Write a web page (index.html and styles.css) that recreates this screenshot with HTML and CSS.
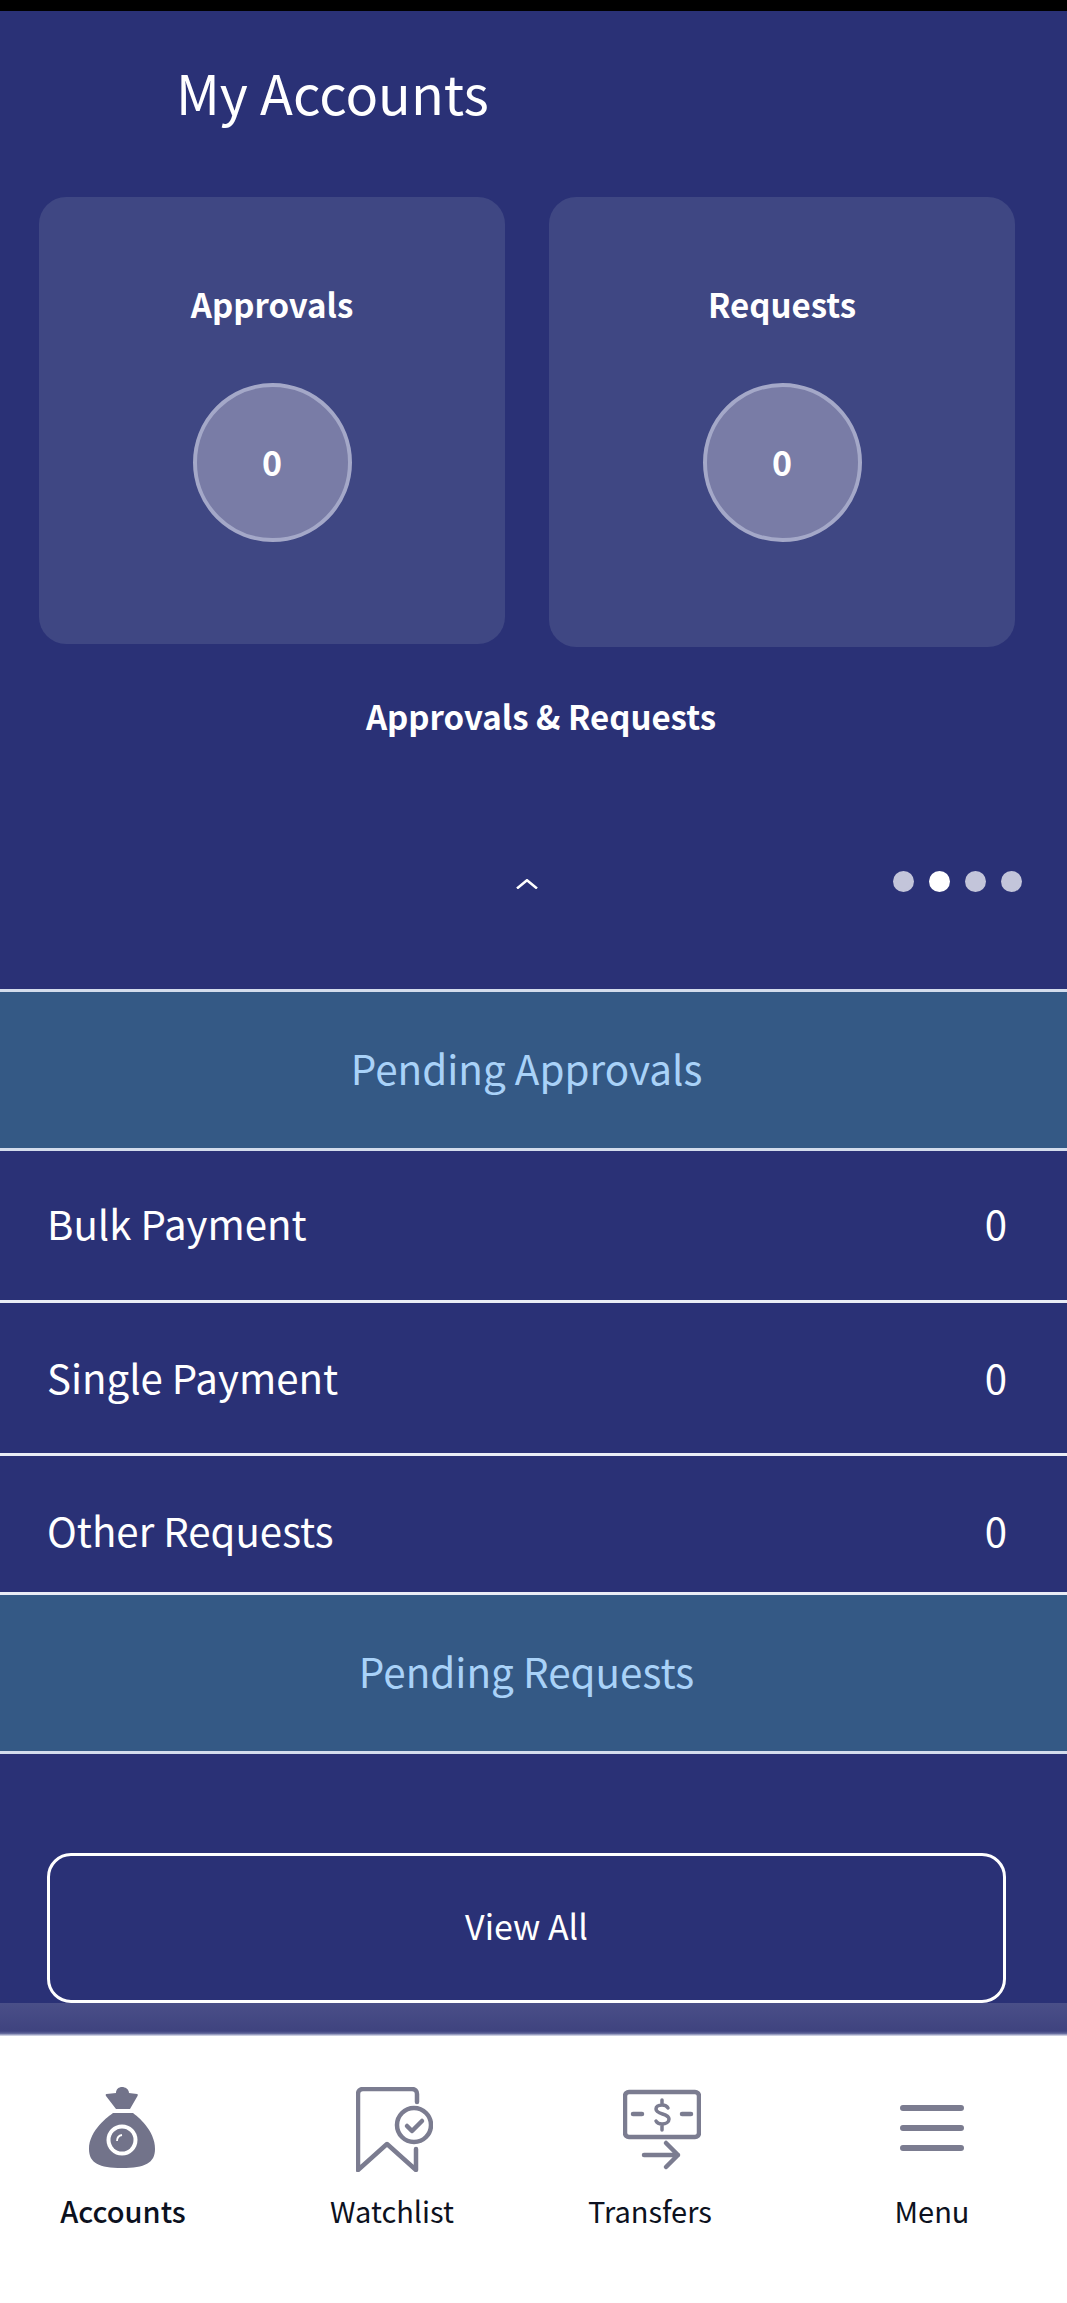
FILE: index.html
```html
<!DOCTYPE html>
<html lang="en">
<head>
<meta charset="utf-8">
<title>My Accounts</title>
<link rel="stylesheet" href="styles.css">
</head>
<body>
<div class="status"></div>
<main class="screen">
  <h1 class="title">My Accounts</h1>
  <section class="cards">
    <article class="card">
      <h2 class="card-name">Approvals</h2>
      <div class="count">0</div>
    </article>
    <article class="card card-tall">
      <h2 class="card-name">Requests</h2>
      <div class="count">0</div>
    </article>
  </section>
  <p class="caption">Approvals &amp; Requests</p>
  <div class="pager">
    <svg class="chevron" viewBox="0 0 22 10"><path d="M1 9.500 11 1.200 21 9.500"/></svg>
    <div class="dots">
      <span class="dot"></span><span class="dot dot-on"></span><span class="dot"></span><span class="dot"></span>
    </div>
  </div>
  <div class="band band-first"><span>Pending Approvals</span></div>
  <div class="row"><span>Bulk Payment</span><span>0</span></div>
  <div class="row row-b"><span>Single Payment</span><span>0</span></div>
  <div class="row row-c"><span>Other Requests</span><span>0</span></div>
  <div class="band"><span>Pending Requests</span></div>
  <div class="action"><button class="view-all" type="button">View All</button></div>
  <div class="fade"></div>
</main>
<nav class="tabs">
  <a class="tab tab-active">
    <svg class="icon" width="66" height="85" viewBox="0 0 66 85">
      <path class="solid" d="M27 6c0-4 3-6 6-6s7 2 7 6l8 1c1 0 1 1 .5 2L41 22H27L17 9c-.5-1-.5-2 .5-2z"/>
      <path class="solid" d="M24 26h20c4 3 22 17 22 36 0 14-10 19-33 19S0 76 0 62c0-19 20-33 24-36z"/>
      <circle cx="33" cy="53" r="15.500" fill="#fff"/>
      <circle class="solid" cx="33" cy="53" r="11.500"/>
      <path d="M28 54c0-3 2-5.500 5-6" fill="none" stroke="#fff" stroke-width="1.800"/>
    </svg>
    <span class="nudged">Accounts</span>
  </a>
  <a class="tab">
    <svg class="icon icon-watch" width="77" height="85" viewBox="0 0 77 85">
      <path class="line" d="M61 15V7c0-3-2-5-5-5H7C4 2 2 4 2 7v76l29-26 29 26V62"/>
      <circle class="line" cx="58" cy="38" r="17"/>
      <path class="line" d="M51 39l5 5 10-10"/>
    </svg>
    <span>Watchlist</span>
  </a>
  <a class="tab">
    <svg class="icon" width="78" height="85" viewBox="0 -3 78 85">
      <rect class="line" x="2" y="2" width="74" height="45" rx="4"/>
      <path class="line" d="M10 24h9M59 24h9M21 65h34M43 53l12 12-12 12"/>
      <path class="line-thin" d="M45 18c-1-2-3-3-6-3-4 0-6 2-6 4 0 6 13 4 13 10 0 3-3 5-7 5-3 0-5-1-6-3M39 10v4M39 35v5"/>
    </svg>
    <span class="shifted">Transfers</span>
  </a>
  <a class="tab">
    <svg class="icon" width="64" height="85" viewBox="0 0 64 85">
      <path class="line bars" d="M3 21h58M3 41h58M3 61h58"/>
    </svg>
    <span>Menu</span>
  </a>
</nav>
</body>
</html>
```
FILE: styles.css
```css
* { box-sizing: border-box; }
html, body { margin: 0; padding: 0; }
body {
  width: 1067px;
  height: 2303px;
  overflow: hidden;
  background: #fff;
  font-family: "Noto Sans CJK JP", "Noto Sans", sans-serif;
}
.status { height: 11px; background: #000; }
.screen { background: #2a3176; height: 2025px; overflow: hidden; color: #fff; }
.title {
  margin: 0;
  height: 186px;
  padding: 41px 0 0 176px;
  font-size: 54px;
  line-height: 80px;
  font-weight: 400;
}
.cards { display: flex; align-items: flex-start; gap: 44px; padding-left: 39px; }
.card {
  width: 466px;
  height: 447px;
  border-radius: 27px;
  background: #3f4783;
  display: flex;
  flex-direction: column;
  align-items: center;
  padding-top: 82px;
}
.card-tall { height: 450px; }
.card-name { margin: 0; font-size: 33px; line-height: 50px; font-weight: 700; }
.count {
  width: 159px;
  height: 159px;
  margin-top: 54px;
  padding-bottom: 3px;
  border-radius: 50%;
  border: 4px solid #a4a8c8;
  background: #797ca6;
  font-size: 34px;
  font-weight: 700;
  display: flex;
  align-items: center;
  justify-content: center;
}
.caption {
  margin: 44px 0 0;
  padding-left: 15px;
  text-align: center;
  font-size: 33px;
  line-height: 50px;
  font-weight: 700;
}
.pager { position: relative; height: 248px; }
.chevron {
  position: absolute;
  left: 516px;
  top: 138px;
  width: 22px;
  height: 10px;
  fill: none;
  stroke: #fff;
  stroke-width: 2.500;
}
.dots { position: absolute; left: 893px; top: 130px; display: flex; gap: 15px; }
.dot { width: 21px; height: 21px; border-radius: 50%; background: #c3c5da; }
.dot-on { background: #fff; }
.band {
  height: 159px;
  width: 1067px;
  padding: 0 14px 6px 0;
  border-bottom: 3px solid #d3dcec;
  background: #345985;
  color: #a9d2f8;
  font-size: 40.400px;
  display: flex;
  align-items: center;
  justify-content: center;
}
.band-first { height: 162px; border-top: 3px solid #d3dcec; }
.row {
  height: 152px;
  padding: 0 60px 6px 47px;
  border-bottom: 3px solid #e9ecf5;
  font-size: 40.200px;
  display: flex;
  align-items: center;
  justify-content: space-between;
}
.row-b { height: 153px; padding-bottom: 4px; }
.row-c { height: 139px; padding: 11px 60px 0 47px; }
.action { padding: 99px 61px 0 47px; }
.view-all {
  display: block;
  width: 100%;
  height: 150px;
  padding: 0 0 6px;
  border: 3px solid #fff;
  border-radius: 24px;
  background: transparent;
  color: #fff;
  font: inherit;
  font-size: 34px;
}
.fade { height: 33px; background: linear-gradient(#4a4f88, #3f437f 85%, #5e6498 92%, #e3e6f2); }
.tabs {
  display: grid;
  grid-template-columns: 257px repeat(3, 270px);
  padding-top: 51px;
  background: #fff;
}
.tab {
  display: flex;
  flex-direction: column;
  align-items: center;
  color: #0c1120;
  font-size: 29px;
  line-height: 46px;
}
.tab:first-child { padding-right: 13px; }
.tab-active { font-weight: 500; }
.icon { display: block; margin-bottom: 15px; }
.icon-watch { margin-left: 5px; }
.shifted { margin-right: 24px; }
.nudged { margin-left: 2px; }
.solid { fill: #72738a; }
.line { fill: none; stroke: #7b7c90; stroke-width: 4.500; stroke-linecap: round; stroke-linejoin: round; }
.line-thin { fill: none; stroke: #7b7c90; stroke-width: 3.500; stroke-linecap: round; }
.bars { stroke-width: 6; }
```
